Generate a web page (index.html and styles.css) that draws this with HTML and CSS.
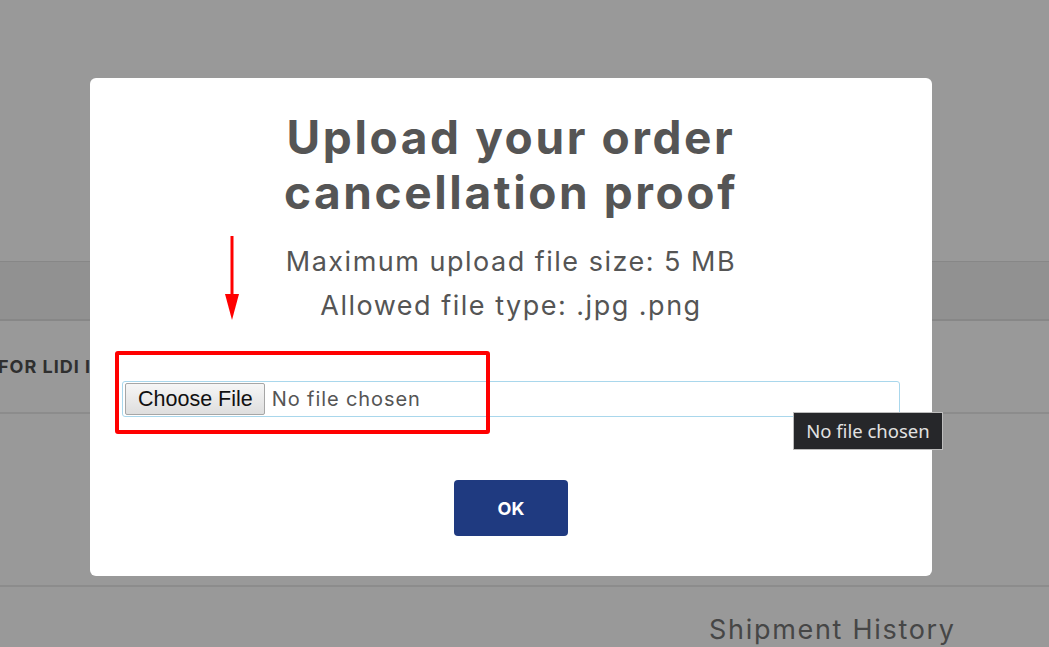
FILE: index.html
```html
<!DOCTYPE html>
<html lang="en">
<head>
    <meta charset="UTF-8">
    <title>Upload cancellation proof</title>
    <link rel="stylesheet" href="styles.css">
</head>
<body>

    <div class="page">
        <div class="top-space"></div>
        <div class="tabs-band"></div>
        <div class="row row-name">
            <span class="seller">FOR LIDI INDIA</span>
        </div>
        <div class="row row-detail"></div>
        <div class="row row-history">
            <span class="history">Shipment History</span>
        </div>
    </div>

    <div class="modal">
        <h1 class="modal-title">Upload your order<br>cancellation proof</h1>
        <p class="modal-info">Maximum upload file size: 5 MB<br>Allowed file type: .jpg .png</p>

        <div class="file-field">
            <span class="file-button">Choose File</span>
            <span class="file-name">No file chosen</span>
        </div>

        <div class="actions">
            <button class="ok-button">OK</button>
        </div>
    </div>

    <!-- annotation over the screenshot -->
    <svg class="arrow" width="20" height="86" viewBox="0 0 20 86">
        <line x1="10" y1="0" x2="10" y2="62" stroke="#ff0000" stroke-width="3"/>
        <polygon points="3,58 17,58 10,84" fill="#ff0000"/>
    </svg>
    <div class="highlight"></div>

    <div class="tooltip">No file chosen</div>

</body>
</html>
```

FILE: styles.css
```css
body {
    margin: 0;
    background-color: #999;
    font-family: Inter, "Noto Sans", sans-serif;
    overflow: hidden;
}
.page {
    height: 647px;
}
.top-space {
    height: 261px;
}
.tabs-band {
    height: 57px;
    background-color: #919191;
    border-top: 1px solid #878787;
    border-bottom: 2px solid #878787;
}
.row {
    border-bottom: 2px solid #8c8c8c;
}
.row-name {
    height: 91px;
    display: flex;
    align-items: center;
}
.seller {
    font-weight: 700;
    font-size: 18px;
    color: #2f2f2f;
    margin-left: -2px;
    white-space: nowrap;
    letter-spacing: 1px;
}
.row-detail {
    height: 171px;
}
.row-history {
    border-bottom: none;
    padding-top: 26px;
    padding-left: 709px;
}
.history {
    font-size: 27px;
    color: #464646;
    white-space: nowrap;
    letter-spacing: 1.7px;
}
.modal {
    position: absolute;
    left: 90px;
    top: 78px;
    width: 778px;
    padding: 32px 32px 40px 32px;
    background-color: #fff;
    border-radius: 6px;
    text-align: center;
}
.modal-title {
    margin: 0;
    font-size: 46px;
    line-height: 55px;
    font-weight: 700;
    color: #555;
    letter-spacing: 2.6px;
}
.modal-info {
    margin: 20px 0 0 0;
    font-size: 27px;
    line-height: 44px;
    color: #555;
    letter-spacing: 1.5px;
}
.file-field {
    margin-top: 53px;
    height: 34px;
    border: 1px solid #a9d7ec;
    border-radius: 3px;
    display: flex;
    align-items: center;
    text-align: left;
    padding-left: 2px;
}
.file-button {
    height: 30px;
    padding: 0 11px 0 12px;
    display: flex;
    align-items: center;
    background: linear-gradient(#f6f6f6, #dedede);
    border: 1px solid #a6a6a6;
    border-radius: 2px;
    font-family: "Liberation Sans", Arial, sans-serif;
    font-size: 21.5px;
    color: #111;
}
.file-name {
    margin-left: 7px;
    font-family: Inter, "Noto Sans", sans-serif;
    font-size: 20px;
    color: #555;
    letter-spacing: 0.9px;
}
.actions {
    margin-top: 63px;
}
.ok-button {
    width: 114px;
    height: 56px;
    background-color: #1f3a80;
    color: #fff;
    border: none;
    border-radius: 4px;
    font-family: Inter, "Noto Sans", sans-serif;
    font-weight: 700;
    font-size: 18px;
}
.arrow {
    position: absolute;
    left: 222px;
    top: 236px;
}
.highlight {
    position: absolute;
    left: 115px;
    top: 351px;
    width: 367px;
    height: 75px;
    border: 4px solid #ff0000;
    border-radius: 3px;
}
.tooltip {
    position: absolute;
    left: 793px;
    top: 412px;
    width: 148px;
    height: 36px;
    line-height: 36px;
    background-color: #26272a;
    border: 1px solid #bdbdbd;
    color: #e2e2e2;
    font-family: "Noto Sans", sans-serif;
    font-size: 18.5px;
    text-align: center;
}
```
